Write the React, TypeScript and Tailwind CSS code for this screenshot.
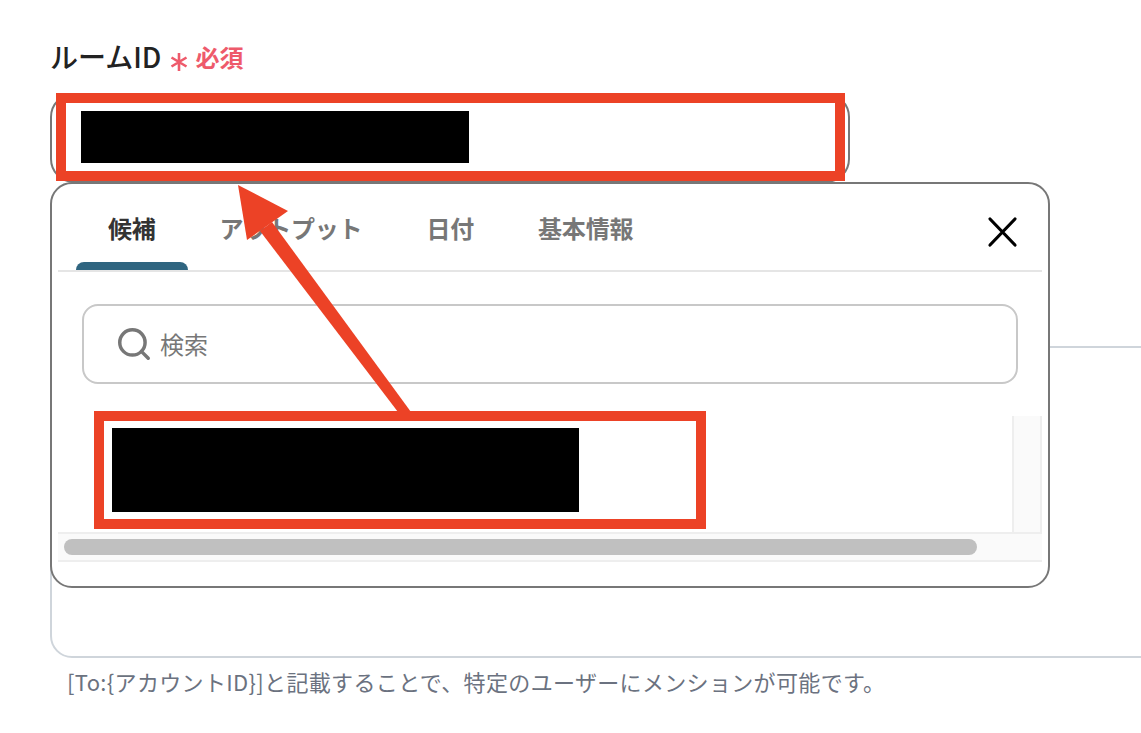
import { Search } from "lucide-react";

const Tab = ({ label, active }: { label: string; active?: boolean }) => {
  return (
    <div className="relative flex h-full items-center px-8 pt-[2px]">
      <span className={active ? "text-[24px] font-bold leading-none tracking-[-0.2px] text-[#333]" : "text-[24px] font-bold leading-none tracking-[-0.2px] text-[#777]"}>
        {label}
      </span>
      {active && <div className="absolute bottom-0 left-0 right-0 h-[8px] rounded-t-[8px] bg-[#2f6580]" />}
    </div>
  );
};

const Popup = () => {
  return (
    <div className="absolute left-[50px] top-[182px] flex h-[406px] w-[1000px] flex-col rounded-[22px] border-2 border-[#777] bg-white px-[6px]">
      <div className="relative flex h-[88px] items-stretch border-b-2 border-[#e5e5e5] pl-[18px]">
        <Tab label="候補" active />
        <Tab label="アウトプット" />
        <Tab label="日付" />
        <Tab label="基本情報" />
        <svg className="absolute right-[24px] top-[32px]" width="32" height="32" viewBox="0 0 32 32" fill="none">
          <path d="M4 3 L29 29 M29 3 L4 29" stroke="#000" strokeWidth="3.2" strokeLinecap="round" />
        </svg>
      </div>
      <div className="mx-6 mt-8 flex h-[80px] items-center rounded-[16px] border-2 border-[#c8c8c8] pl-[31px]">
        <Search className="h-[38px] w-[38px] text-[#777]" strokeWidth={2.2} />
        <span className="ml-[7px] text-[24px] leading-none text-[#777]">検索</span>
      </div>
      <div className="mt-8 flex h-[146px] flex-col">
        <div className="flex flex-1">
          <div className="flex-1 bg-white" />
          <div className="w-[30px] border-x-2 border-[#eee] bg-[#fafafa]" />
        </div>
        <div className="flex h-[30px] items-center border-y-2 border-[#eee] bg-[#fafafa] pl-[6px]">
          <div className="h-[16px] w-[913px] rounded-full bg-[#c0c0c0]" />
        </div>
      </div>
    </div>
  );
};

export default function App() {
  return (
    <div className="relative h-[733px] w-[1141px] overflow-hidden bg-white pl-[50px] pt-[38px] font-['Noto_Sans_CJK_JP',sans-serif]">
      <div className="flex h-[36px] items-center">
        <span className="text-[28px] font-medium leading-none text-[#222]">ルームID</span>
        <svg className="ml-[9px] mt-[12px]" width="18" height="20" viewBox="0 0 18 20" fill="none">
          <path d="M9 1 V19 M1.5 5.5 L16.5 14.5 M16.5 5.5 L1.5 14.5" stroke="#ee5a6b" strokeWidth="2.6" />
        </svg>
        <span className="ml-[7px] mt-[2px] text-[24px] font-bold leading-none text-[#ee5a6b]">必須</span>
      </div>
      <div className="mt-[19px] h-[90px] w-[800px] rounded-[24px] border-2 border-[#777]" />
      <div className="mt-[163px] h-[312px] w-[1200px] rounded-[22px] border-2 border-[#cfd5db]" />
      <div className="ml-[17px] mt-[8px] text-[22px] leading-[30px] tracking-[0.34px] text-[#6b7280]">
        [To:{"{"}アカウントID{"}"}]と記載することで、特定のユーザーにメンションが可能です。
      </div>

      <Popup />

      {/* annotation overlays */}
      <div className="absolute left-[56px] top-[93px] h-[88px] w-[789px] border-[10px] border-[#ec4226]" />
      <div className="absolute left-[81px] top-[111px] h-[52px] w-[388px] bg-black" />
      <div className="absolute left-[94px] top-[411px] h-[118px] w-[612px] border-[10px] border-[#ec4226]" />
      <div className="absolute left-[112px] top-[428px] h-[84px] w-[467px] bg-black" />
      <svg className="absolute left-0 top-0" width="1141" height="733" viewBox="0 0 1141 733" fill="none">
        <polygon points="398,412 411,412 272,222 260,231" fill="#ec4226" />
        <polygon points="238,185 288,211 247,240" fill="#ec4226" />
      </svg>
    </div>
  );
}
